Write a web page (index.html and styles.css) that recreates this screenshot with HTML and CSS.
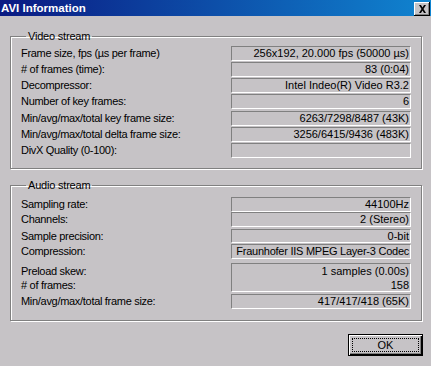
FILE: index.html
```html
<!DOCTYPE html>
<html lang="en">
<head>
  <meta charset="UTF-8">
  <title>AVI Information</title>
  <link rel="stylesheet" href="styles.css">
</head>
<body>

<div class="window">
  <div class="titlebar">
    <span class="title">AVI Information</span>
    <button class="close" aria-label="Close">
      <svg width="9" height="8" viewBox="0 0 9 8">
        <path d="M1 0h2l1.5 2.5L6 0h2L5.5 4 8 8H6L4.5 5.5 3 8H1l2.5-4z" fill="#000"/>
      </svg>
    </button>
  </div>

  <fieldset class="group video">
    <legend>Video stream</legend>
    <div class="row"><span class="label">Frame size, fps (µs per frame)</span><span class="value">256x192, 20.000 fps (50000 µs)</span></div>
    <div class="row"><span class="label"># of frames (time):</span><span class="value">83 (0:04)</span></div>
    <div class="row"><span class="label">Decompressor:</span><span class="value">Intel Indeo(R) Video R3.2</span></div>
    <div class="row"><span class="label">Number of key frames:</span><span class="value">6</span></div>
    <div class="row gap2"><span class="label">Min/avg/max/total key frame size:</span><span class="value">6263/7298/8487 (43K)</span></div>
    <div class="row"><span class="label">Min/avg/max/total delta frame size:</span><span class="value">3256/6415/9436 (483K)</span></div>
    <div class="row"><span class="label">DivX Quality (0-100):</span><span class="value"></span></div>
  </fieldset>

  <fieldset class="group audio">
    <legend>Audio stream</legend>
    <div class="row gap0"><span class="label">Sampling rate:</span><span class="value">44100Hz</span></div>
    <div class="row gap0"><span class="label">Channels:</span><span class="value">2 (Stereo)</span></div>
    <div class="row gap2"><span class="label">Sample precision:</span><span class="value short">0-bit</span></div>
    <div class="row gap0"><span class="label">Compression:</span><span class="value tight">Fraunhofer IIS MPEG Layer-3 Codec</span></div>
    <div class="row gap4 tall">
      <span class="label">Preload skew:<br># of frames:</span>
      <span class="value">1 samples (0.00s)<br>158</span>
    </div>
    <div class="row gap2"><span class="label">Min/avg/max/total frame size:</span><span class="value">417/417/418 (65K)</span></div>
  </fieldset>

  <div class="actions">
    <button class="ok"><span class="focus">OK</span></button>
  </div>
</div>

</body>
</html>
```

FILE: styles.css
```css
body {
  margin: 0;
  font-family: "Liberation Sans", Arial, sans-serif;
  font-size: 11px;
  color: #000;
  background: #c6c3c6;
}

.window {
  width: 431px;
  height: 366px;
  background: #c6c3c6;
  overflow: hidden;
}

.titlebar {
  height: 16px;
  display: flex;
  align-items: center;
  justify-content: space-between;
  padding: 0 1px 0 1px;
  background: linear-gradient(to right, #0a1a82, #1084d0);
}

.title {
  color: #fff;
  font-weight: bold;
  font-size: 11.5px;
  line-height: 16px;
}

.close {
  width: 16px;
  height: 14px;
  margin-top: 2px;
  padding: 0;
  display: flex;
  align-items: center;
  justify-content: center;
  background: #c6c3c6;
  border: none;
  box-shadow: inset -1px -1px #000, inset 1px 1px #fff, inset -2px -2px #808080;
}

.group {
  margin: 0 9px 0 10px;
  padding: 3px 10px 10px;
  min-width: 0;
  border: 1px solid #808080;
  box-shadow: inset 1px 1px 0 #fff, 1px 1px 0 #fff;
}

.group legend {
  margin-left: 5px;
  padding: 0 2px;
  line-height: 13px;
  letter-spacing: -0.2px;
}

.video {
  margin-top: 14px;
}

.audio {
  margin-top: 10px;
  padding-top: 5px;
  padding-bottom: 11px;
}

.row {
  display: flex;
  align-items: stretch;
  margin-top: 1px;
}

.row:first-of-type {
  margin-top: 0;
}

.row.gap0 { margin-top: 0; }
.row.gap2 { margin-top: 2px; }
.row.gap4 { margin-top: 4px; }

.label {
  flex: 1;
  line-height: 15px;
  letter-spacing: -0.3px;
}

.value {
  box-sizing: border-box;
  width: 180px;
  height: 15px;
  line-height: 13px;
  padding-right: 1px;
  text-align: right;
  white-space: nowrap;
  border-top: 1px solid #808080;
  border-left: 1px solid #808080;
  border-bottom: 1px solid #fff;
  border-right: 1px solid #fff;
}

.value.short {
  height: 14px;
  line-height: 12px;
}

.value.tight {
  letter-spacing: -0.25px;
}

.tall .label {
  line-height: 14px;
  padding-top: 1px;
}

.tall .value {
  height: 29px;
  line-height: 14px;
}

.actions {
  display: flex;
  justify-content: flex-end;
  margin-top: 13px;
  padding-right: 8px;
}

.ok {
  width: 75px;
  height: 22px;
  padding: 3px;
  font-family: "Liberation Sans", Arial, sans-serif;
  font-size: 11px;
  background: #c6c3c6;
  border: 1px solid #000;
  box-shadow: inset 1px 1px #fff, inset -1px -1px #000, inset -2px -2px #808080;
  display: flex;
}

.ok .focus {
  flex: 1;
  border: 1px dotted #000;
  line-height: 12px;
  text-align: center;
}
```
